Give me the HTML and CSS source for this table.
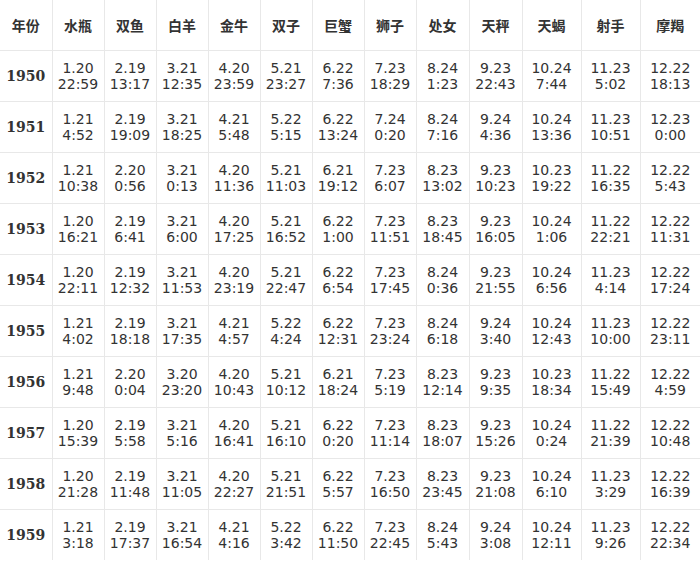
FILE: index.html
```html
<!DOCTYPE html>
<html lang="zh">
<head>
<meta charset="utf-8">
<link rel="stylesheet" href="styles.css">
</head>
<body>
<table class="zodiac">
<colgroup>
<col class="c52"><col class="c52"><col class="c52"><col class="c52"><col class="c52"><col class="c52"><col class="c52"><col class="c52"><col class="c53"><col class="c53"><col class="c59"><col class="c59"><col class="c60">
</colgroup>
<thead>
<tr><th>年份</th><th>水瓶</th><th>双鱼</th><th>白羊</th><th>金牛</th><th>双子</th><th>巨蟹</th><th>狮子</th><th>处女</th><th>天秤</th><th>天蝎</th><th>射手</th><th>摩羯</th></tr>
</thead>
<tbody>
<tr><td class="yr">1950</td><td>1.20<br>22:59</td><td>2.19<br>13:17</td><td>3.21<br>12:35</td><td>4.20<br>23:59</td><td>5.21<br>23:27</td><td>6.22<br>7:36</td><td>7.23<br>18:29</td><td>8.24<br>1:23</td><td>9.23<br>22:43</td><td>10.24<br>7:44</td><td>11.23<br>5:02</td><td>12.22<br>18:13</td></tr>
<tr><td class="yr">1951</td><td>1.21<br>4:52</td><td>2.19<br>19:09</td><td>3.21<br>18:25</td><td>4.21<br>5:48</td><td>5.22<br>5:15</td><td>6.22<br>13:24</td><td>7.24<br>0:20</td><td>8.24<br>7:16</td><td>9.24<br>4:36</td><td>10.24<br>13:36</td><td>11.23<br>10:51</td><td>12.23<br>0:00</td></tr>
<tr><td class="yr">1952</td><td>1.21<br>10:38</td><td>2.20<br>0:56</td><td>3.21<br>0:13</td><td>4.20<br>11:36</td><td>5.21<br>11:03</td><td>6.21<br>19:12</td><td>7.23<br>6:07</td><td>8.23<br>13:02</td><td>9.23<br>10:23</td><td>10.23<br>19:22</td><td>11.22<br>16:35</td><td>12.22<br>5:43</td></tr>
<tr><td class="yr">1953</td><td>1.20<br>16:21</td><td>2.19<br>6:41</td><td>3.21<br>6:00</td><td>4.20<br>17:25</td><td>5.21<br>16:52</td><td>6.22<br>1:00</td><td>7.23<br>11:51</td><td>8.23<br>18:45</td><td>9.23<br>16:05</td><td>10.24<br>1:06</td><td>11.22<br>22:21</td><td>12.22<br>11:31</td></tr>
<tr><td class="yr">1954</td><td>1.20<br>22:11</td><td>2.19<br>12:32</td><td>3.21<br>11:53</td><td>4.20<br>23:19</td><td>5.21<br>22:47</td><td>6.22<br>6:54</td><td>7.23<br>17:45</td><td>8.24<br>0:36</td><td>9.23<br>21:55</td><td>10.24<br>6:56</td><td>11.23<br>4:14</td><td>12.22<br>17:24</td></tr>
<tr><td class="yr">1955</td><td>1.21<br>4:02</td><td>2.19<br>18:18</td><td>3.21<br>17:35</td><td>4.21<br>4:57</td><td>5.22<br>4:24</td><td>6.22<br>12:31</td><td>7.23<br>23:24</td><td>8.24<br>6:18</td><td>9.24<br>3:40</td><td>10.24<br>12:43</td><td>11.23<br>10:00</td><td>12.22<br>23:11</td></tr>
<tr><td class="yr">1956</td><td>1.21<br>9:48</td><td>2.20<br>0:04</td><td>3.20<br>23:20</td><td>4.20<br>10:43</td><td>5.21<br>10:12</td><td>6.21<br>18:24</td><td>7.23<br>5:19</td><td>8.23<br>12:14</td><td>9.23<br>9:35</td><td>10.23<br>18:34</td><td>11.22<br>15:49</td><td>12.22<br>4:59</td></tr>
<tr><td class="yr">1957</td><td>1.20<br>15:39</td><td>2.19<br>5:58</td><td>3.21<br>5:16</td><td>4.20<br>16:41</td><td>5.21<br>16:10</td><td>6.22<br>0:20</td><td>7.23<br>11:14</td><td>8.23<br>18:07</td><td>9.23<br>15:26</td><td>10.24<br>0:24</td><td>11.22<br>21:39</td><td>12.22<br>10:48</td></tr>
<tr><td class="yr">1958</td><td>1.20<br>21:28</td><td>2.19<br>11:48</td><td>3.21<br>11:05</td><td>4.20<br>22:27</td><td>5.21<br>21:51</td><td>6.22<br>5:57</td><td>7.23<br>16:50</td><td>8.23<br>23:45</td><td>9.23<br>21:08</td><td>10.24<br>6:10</td><td>11.23<br>3:29</td><td>12.22<br>16:39</td></tr>
<tr><td class="yr">1959</td><td>1.21<br>3:18</td><td>2.19<br>17:37</td><td>3.21<br>16:54</td><td>4.21<br>4:16</td><td>5.22<br>3:42</td><td>6.22<br>11:50</td><td>7.23<br>22:45</td><td>8.24<br>5:43</td><td>9.24<br>3:08</td><td>10.24<br>12:11</td><td>11.23<br>9:26</td><td>12.22<br>22:34</td></tr>
</tbody>
</table>
</body>
</html>
```
FILE: styles.css
```css
html, body {
  margin: 0;
  padding: 0;
  background: #fff;
}
.zodiac {
  width: 700px;
  table-layout: fixed;
  border-collapse: collapse;
  color: #333;
  font-family: "DejaVu Sans", Verdana, sans-serif;
  font-size: 14px;
}
.c52 { width: 52px; }
.c53 { width: 53px; }
.c59 { width: 59px; }
.c60 { width: 60px; }
.zodiac th,
.zodiac td {
  border: 1px solid #e8e8e8;
  padding: 0;
  text-align: center;
  vertical-align: middle;
  line-height: 16px;
}
.zodiac th {
  height: 50px;
  font-family: "Noto Sans CJK SC", sans-serif;
  font-weight: bold;
  font-size: 14px;
  border-top: none;
}
.zodiac td {
  height: 50px;
}
.zodiac tr > :first-child { border-left: none; }
.zodiac tr > :last-child { border-right: none; }
.zodiac tbody tr:last-child td { border-bottom: none; }
.zodiac td.yr {
  font-family: "DejaVu Serif", serif;
  font-weight: bold;
  font-size: 14px;
}
```
